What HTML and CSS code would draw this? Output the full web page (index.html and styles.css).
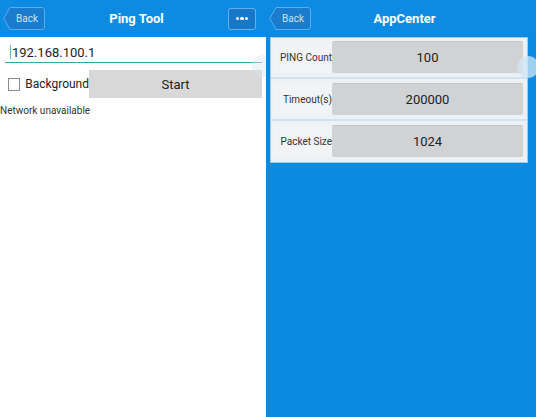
FILE: index.html
```html
<!DOCTYPE html>
<html lang="en">
<head>
  <meta charset="UTF-8" />
  <title>Ping Tool</title>
  <link rel="stylesheet" href="styles.css">
</head>
<body>
  <div class="screen screen-ping">
    <div class="topbar">
      <div class="back-btn">
        <svg class="back-shape" viewBox="0 0 42 23" preserveAspectRatio="none">
          <path d="M7 0.5 H39 Q41.5 0.5 41.5 3 V20 Q41.5 22.5 39 22.5 H7 L0.8 11.5 Z" fill="#1a7ccc" stroke="#55aef0" stroke-width="1"/>
        </svg>
        <span>Back</span>
      </div>
      <div class="title">Ping Tool</div>
      <div class="more-btn">
        <i></i><i></i><i></i>
      </div>
    </div>

    <div class="content">
      <div class="ip-input">
        <span class="caret"></span>192.168.100.1
      </div>
      <div class="action-row">
        <label class="check">
          <span class="box"></span>
          Background
        </label>
        <div class="start-btn">Start</div>
      </div>
      <div class="status">Network unavailable</div>
      <div class="ghost ghost-left"></div>
    </div>
  </div>

  <div class="screen screen-app">
    <div class="topbar">
      <div class="back-btn">
        <svg class="back-shape" viewBox="0 0 42 23" preserveAspectRatio="none">
          <path d="M7 0.5 H39 Q41.5 0.5 41.5 3 V20 Q41.5 22.5 39 22.5 H7 L0.8 11.5 Z" fill="#1a7ccc" stroke="#55aef0" stroke-width="1"/>
        </svg>
        <span>Back</span>
      </div>
      <div class="title">AppCenter</div>
      <div class="spacer"></div>
    </div>

    <div class="settings">
      <div class="setting-row">
        <div class="setting-label">PING Count</div>
        <div class="setting-field">100</div>
      </div>
      <div class="setting-row">
        <div class="setting-label">Timeout(s)</div>
        <div class="setting-field">200000</div>
      </div>
      <div class="setting-row">
        <div class="setting-label">Packet Size</div>
        <div class="setting-field">1024</div>
      </div>
      <div class="ghost ghost-right"></div>
    </div>
  </div>
</body>
</html>
```

FILE: styles.css
```css
* {
  box-sizing: border-box;
}

body {
  margin: 0;
  width: 536px;
  height: 417px;
  display: flex;
  font-family: Roboto, 'Noto Sans', sans-serif;
  overflow: hidden;
}

.screen {
  display: flex;
  flex-direction: column;
  height: 100%;
  overflow: hidden;
}

.screen-ping {
  width: 266px;
  background: #ffffff;
}

.screen-app {
  flex: 1;
  background: #0b8ae2;
}

.topbar {
  height: 37px;
  background: #0d8be2;
  display: flex;
  align-items: center;
  padding: 0 10px 0 3px;
}

.back-btn {
  position: relative;
  width: 42px;
  height: 23px;
  display: flex;
  align-items: center;
  justify-content: center;
  padding-left: 6px;
  margin-top: -1px;
}

.back-shape {
  position: absolute;
  left: 0;
  top: 0;
  width: 42px;
  height: 23px;
}

.back-btn span {
  position: relative;
  font-size: 10px;
  color: #c8e2fa;
}

.title {
  flex: 1;
  text-align: center;
  color: #ffffff;
  font-weight: 700;
  font-size: 13px;
}

.more-btn {
  width: 28px;
  height: 22px;
  border: 1px solid #5fb2f0;
  border-radius: 3px;
  background: #1777c8;
  display: flex;
  align-items: center;
  justify-content: center;
  gap: 1px;
}

.more-btn i {
  width: 3.5px;
  height: 3.5px;
  border-radius: 50%;
  background: #ffffff;
}

.spacer {
  width: 28px;
}

.content {
  position: relative;
  flex: 1;
  padding-top: 5px;
}

.ip-input {
  margin: 0 4px 0 5px;
  height: 21px;
  padding-left: 5px;
  display: flex;
  align-items: center;
  font-size: 13px;
  color: #222222;
  border-bottom: 1px solid #3f9fb3;
}

.caret {
  width: 1px;
  height: 14px;
  background: #6fb6c2;
  margin-right: 1px;
}

.action-row {
  display: flex;
  align-items: center;
  height: 28px;
  margin-top: 7px;
  padding: 0 4px 0 8px;
}

.check {
  display: flex;
  align-items: center;
  gap: 5px;
  font-size: 12px;
  color: #222222;
  width: 81px;
}

.box {
  width: 13px;
  height: 13px;
  border: 1px solid #8a8a8a;
  background: #ffffff;
}

.start-btn {
  flex: 1;
  height: 28px;
  background: #d8d8d8;
  display: flex;
  align-items: center;
  justify-content: center;
  font-size: 13px;
  color: #222222;
}

.status {
  font-size: 10px;
  color: #333333;
  margin-top: 7px;
}

.ghost {
  position: absolute;
  width: 22px;
  height: 22px;
  border-radius: 50%;
  background: rgba(220, 230, 236, 0.45);
}

.ghost-left {
  right: -8px;
  top: 18px;
}

.settings {
  position: relative;
  margin: 0 8px 0 4px;
  padding: 3px 4px 5px 2px;
  background: #ebf1f5;
  border: 1px solid #9ccdf0;
  display: flex;
  flex-direction: column;
  gap: 10px;
}

.setting-row {
  display: flex;
  height: 32px;
  position: relative;
}

.setting-row + .setting-row::before {
  content: "";
  position: absolute;
  left: -2px;
  right: -4px;
  top: -6px;
  height: 2px;
  background: #cfe4f2;
}

.setting-label {
  width: 59px;
  display: flex;
  align-items: center;
  justify-content: flex-end;
  font-size: 10px;
  color: #333333;
  background: #f2f3f4;
  white-space: nowrap;
}

.setting-field {
  flex: 1;
  background: #d1d2d3;
  border-radius: 2px;
  border-top: 1px solid #c4c6c8;
  display: flex;
  align-items: center;
  justify-content: center;
  font-size: 13px;
  color: #222222;
}

.ghost-right {
  right: -12px;
  top: 18px;
  background: rgba(210, 230, 245, 0.75);
}
```
